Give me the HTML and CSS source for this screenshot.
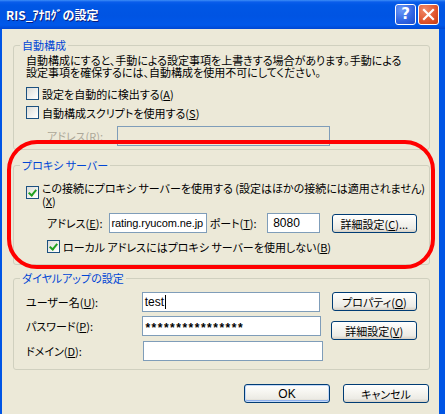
FILE: index.html
```html
<!DOCTYPE html>
<html lang="ja">
<head>
    <meta charset="UTF-8">
    <title>RIS_アナログの設定</title>
    <link rel="stylesheet" href="styles.css">
</head>
<body>
    <div class="window">
        <div class="titlebar">
            <span class="title">RIS_ｱﾅﾛｸﾞの設定</span>
            <div class="caption-buttons">
                <span class="cap-btn help">?</span>
                <span class="cap-btn close">
                    <svg width="13" height="13" viewBox="0 0 13 13">
                        <path d="M2 2 L11 11 M11 2 L2 11" stroke="#fff" stroke-width="2.2" stroke-linecap="square"/>
                    </svg>
                </span>
            </div>
        </div>

        <div class="client">
            <fieldset class="group group-auto">
                <legend>自動構成</legend>
                <p class="note">自動構成にすると、手動による設定事項を上書きする場合があります。手動による<br>設定事項を確保するには、自動構成を使用不可にしてください。</p>
                <div class="check first">
                    <span class="box"></span>
                    <span>設定を自動的に検出する(<u>A</u>)</span>
                </div>
                <div class="check">
                    <span class="box"></span>
                    <span>自動構成スクリプトを使用する(<u>S</u>)</span>
                </div>
                <div class="row auto-address">
                    <span class="label disabled">アドレス(<u>R</u>):</span>
                    <span class="textbox readonly"></span>
                </div>
            </fieldset>

            <fieldset class="group group-proxy">
                <legend>プロキシ サーバー</legend>
                <div class="check multi">
                    <span class="box checked"></span>
                    <span>この接続にプロキシ サーバーを使用する (設定はほかの接続には適用されません)<br>(<u>X</u>)</span>
                </div>
                <div class="row proxy-row">
                    <span class="label">アドレス(<u>E</u>):</span>
                    <span class="textbox address">rating.ryucom.ne.jp</span>
                    <span class="label port-label">ポート(<u>T</u>):</span>
                    <span class="textbox port">8080</span>
                    <span class="btn">詳細設定(<u>C</u>)...</span>
                </div>
                <div class="check indent">
                    <span class="box checked"></span>
                    <span>ローカル アドレスにはプロキシ サーバーを使用しない(<u>B</u>)</span>
                </div>
            </fieldset>

            <fieldset class="group group-dialup">
                <legend>ダイヤルアップの設定</legend>
                <div class="row dial-row">
                    <span class="label dial-label">ユーザー名(<u>U</u>):</span>
                    <span class="textbox wide">test<span class="caret"></span></span>
                    <span class="btn">プロパティ(<u>O</u>)</span>
                </div>
                <div class="row dial-row">
                    <span class="label dial-label">パスワード(<u>P</u>):</span>
                    <span class="textbox wide stars">****************</span>
                    <span class="btn shifted">詳細設定(<u>V</u>)</span>
                </div>
                <div class="row dial-row last">
                    <span class="label dial-label">ドメイン(<u>D</u>):</span>
                    <span class="textbox wide"></span>
                </div>
            </fieldset>

            <div class="actions">
                <span class="btn default">OK</span>
                <span class="btn">キャンセル</span>
            </div>
        </div>

        <div class="highlight"></div>
    </div>
</body>
</html>
```

FILE: styles.css
```css
body {
    margin: 0;
    font-family: "Noto Sans CJK JP", sans-serif;
    font-size: 11px;
    font-feature-settings: "palt";
    color: #000;
}
.window {
    position: relative;
    width: 445px;
    height: 414px;
    overflow: hidden;
    background: #0055e5;
    display: flex;
    flex-direction: column;
}
.titlebar {
    height: 29px;
    flex: none;
    display: flex;
    align-items: center;
    justify-content: space-between;
    padding: 0 6px 0 6px;
    box-sizing: border-box;
    background: linear-gradient(to bottom, #3d8ef6 0, #0a5deb 2px, #0057e5 5px, #0054e3 16px, #0058ea 25px, #0046d2 29px);
}
.title {
    color: #fff;
    font-weight: bold;
    font-size: 12px;
    font-feature-settings: normal;
    text-shadow: 1px 1px 0 #0a1c7e;
    margin-top: -1px;
}
.caption-buttons {
    display: flex;
    gap: 2px;
    margin-top: -1px;
}
.cap-btn {
    width: 21px;
    height: 21px;
    box-sizing: border-box;
    border: 1px solid #fff;
    border-radius: 3px;
    display: flex;
    align-items: center;
    justify-content: center;
}
.help {
    background: radial-gradient(circle at 30% 25%, #6d9af8, #2f63e2 60%, #1f4dc8);
    color: #fff;
    font-family: "DejaVu Sans", sans-serif;
    font-weight: bold;
    font-size: 15px;
}
.close {
    background: radial-gradient(circle at 30% 25%, #f08a6a, #e0542c 60%, #c43c14);
}
.client {
    flex: 1;
    margin: 0 6px 0 2px;
    background: #ece9d8;
    padding: 9px 9px 0 11px;
}
.group {
    margin: 0;
    padding: 0 12px;
    border: 1px solid #d0d0bf;
    border-radius: 3px;
    min-width: 0;
}
.group legend {
    color: #0046d5;
    line-height: 14px;
    padding: 0 2px;
    margin-left: -6px;
}
.group-auto {
    padding-bottom: 3px;
}
.group-proxy {
    margin-top: 8px;
    padding-bottom: 11px;
}
.group-dialup {
    margin-top: 6px;
    padding-bottom: 8px;
}
.note {
    margin: 2px 0 0;
    line-height: 12px;
    white-space: nowrap;
}
.check {
    display: flex;
    align-items: center;
    gap: 3px;
    height: 13px;
    line-height: 12px;
    margin-top: 6px;
}
.check.first {
    margin-top: 9px;
}
.check.multi {
    height: auto;
    align-items: flex-start;
    line-height: 13px;
    margin-top: 10px;
    white-space: nowrap;
}
.check.multi .box {
    margin-top: 4px;
}
.check.indent {
    margin: 7px 0 0 21px;
}
.box {
    flex: none;
    width: 13px;
    height: 13px;
    box-sizing: border-box;
    border: 1px solid #1c5180;
    background: linear-gradient(135deg, #dcdcd7, #fafaf8 80%, #fff);
    position: relative;
}
.box.checked::after {
    content: "";
    position: absolute;
    left: 3px;
    top: 1px;
    width: 3px;
    height: 6px;
    border: solid #21a121;
    border-width: 0 2px 2px 0;
    transform: rotate(40deg);
}
.row {
    display: flex;
    align-items: center;
}
.label u,
.check u,
.btn u {
    text-underline-offset: 1px;
}
.disabled {
    color: #aca899;
}
.textbox {
    height: 20px;
    box-sizing: border-box;
    border: 1px solid #7f9db9;
    background: #fff;
    display: flex;
    align-items: center;
    padding: 0 2px;
    font-family: "Liberation Sans", sans-serif;
    font-size: 12px;
    white-space: nowrap;
    overflow: hidden;
}
.auto-address {
    margin: 7px 0 0 21px;
}
.auto-address .label {
    width: 70px;
}
.textbox.readonly {
    width: 213px;
    background: #ece9d8;
}
.proxy-row {
    margin: 4px 0 0 21px;
}
.proxy-row .label {
    width: 63px;
}
.textbox.address {
    width: 98px;
    padding: 0 1px;
    font-size: 11px;
    letter-spacing: -0.1px;
}
.proxy-row .port-label {
    width: 58px;
    margin-left: 3px;
}
.textbox.port {
    width: 53px;
    padding-left: 5px;
}
.btn {
    width: 86px;
    height: 19px;
    box-sizing: border-box;
    border: 1px solid #003c74;
    border-radius: 3px;
    background: linear-gradient(to bottom, #ffffff, #f5f4ef 45%, #ecebe5 80%, #d6d0c5);
    display: flex;
    align-items: center;
    justify-content: center;
    white-space: nowrap;
}
.proxy-row .btn {
    margin-left: 12px;
    align-self: flex-start;
    margin-top: 2px;
}
.dial-row {
    margin-top: 4px;
    align-items: flex-start;
}
.dial-row:first-of-type {
    margin-top: 7px;
}
.dial-row.last {
    margin-top: 1px;
}
.dial-label {
    width: 117px;
    line-height: 20px;
}
.textbox.wide {
    width: 180px;
}
.dial-row .btn {
    margin-left: 12px;
}
.dial-row .btn.shifted {
    margin: 5px 0 0 10px;
}
.stars {
    font-weight: bold;
    letter-spacing: 1.5px;
    padding-top: 3px;
}
.caret {
    display: inline-block;
    width: 1px;
    height: 14px;
    background: #000;
    margin-left: 1px;
}
.actions {
    display: flex;
    justify-content: flex-end;
    gap: 13px;
    margin: 14px 1px 0 0;
}
.btn.default {
    box-shadow: inset 0 0 0 1px #c2d8f8, inset 0 -1px 0 1px #8eb0ec;
    font-family: "Liberation Sans", sans-serif;
    font-size: 12px;
}
.highlight {
    position: absolute;
    left: 7px;
    top: 140px;
    width: 428px;
    height: 129px;
    box-sizing: border-box;
    border: 4px solid #ff0000;
    border-radius: 30px;
    pointer-events: none;
}
```
